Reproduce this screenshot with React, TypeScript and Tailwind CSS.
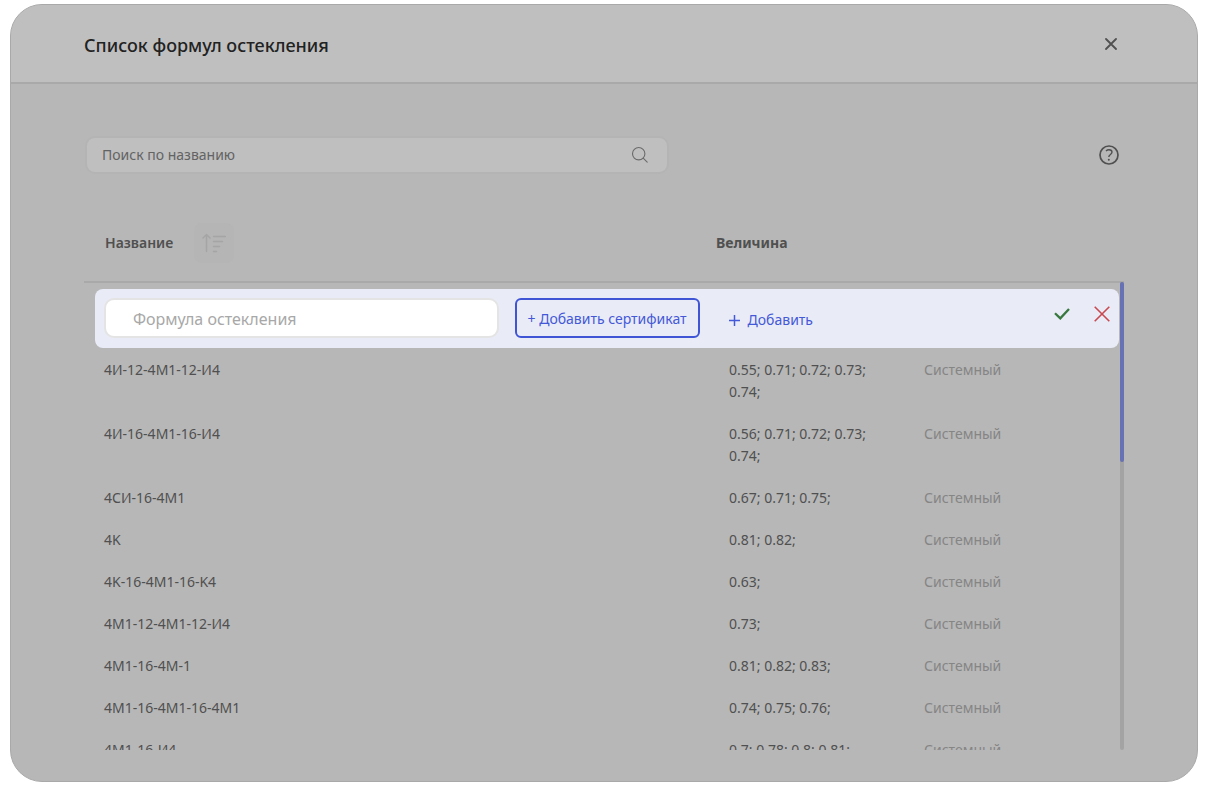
import React from "react";

type Formula = { name: string; values: string };

const formulas: Formula[] = [
  { name: "4И-12-4М1-12-И4", values: "0.55; 0.71; 0.72; 0.73; 0.74;" },
  { name: "4И-16-4М1-16-И4", values: "0.56; 0.71; 0.72; 0.73; 0.74;" },
  { name: "4СИ-16-4М1", values: "0.67; 0.71; 0.75;" },
  { name: "4K", values: "0.81; 0.82;" },
  { name: "4K-16-4М1-16-K4", values: "0.63;" },
  { name: "4М1-12-4М1-12-И4", values: "0.73;" },
  { name: "4М1-16-4М-1", values: "0.81; 0.82; 0.83;" },
  { name: "4М1-16-4М1-16-4М1", values: "0.74; 0.75; 0.76;" },
  { name: "4М1-16-И4", values: "0.7; 0.78; 0.8; 0.81;" },
];

function CloseIcon() {
  return (
    <svg width="12" height="12" viewBox="0 0 12 12" fill="none" stroke="currentColor" strokeWidth="1.8" strokeLinecap="round">
      <path d="M1 1l10 10M11 1L1 11" />
    </svg>
  );
}

function SearchIcon() {
  return (
    <svg width="18" height="18" viewBox="0 0 18 18" fill="none" stroke="currentColor" strokeWidth="1.1" strokeLinecap="round">
      <circle cx="7.7" cy="7.7" r="6.2" />
      <path d="M12.2 12.2l4 4" />
    </svg>
  );
}

function HelpIcon() {
  return (
    <svg width="20" height="20" viewBox="0 0 20 20" fill="none" stroke="currentColor" strokeWidth="1.7">
      <circle cx="10" cy="10" r="9" />
      <path d="M7 5.900C7.800 5.100 8.800 4.700 10 4.700c1.900 0 3 .9 3 2.400 0 2.400-3.200 2.400-3.200 5" strokeWidth="1.4" />
      <circle cx="9.800" cy="14.700" r="1" fill="currentColor" stroke="none" />
    </svg>
  );
}

function SortIcon() {
  return (
    <svg width="24" height="20" viewBox="0 0 24 20" fill="none" stroke="currentColor" strokeWidth="1.5" strokeLinecap="round" strokeLinejoin="round">
      <path d="M4.500 18.500V1.500M1 5l3.500-3.500L8 5M11.500 3.500h12M11.500 8.500h9M11.500 13.500h6M11.500 18.500h3" />
    </svg>
  );
}

function PlusIcon() {
  return (
    <svg width="11" height="11" viewBox="0 0 11 11" fill="none" stroke="currentColor" strokeWidth="1.5">
      <path d="M5.500 0v11M0 5.500h11" />
    </svg>
  );
}

function CheckIcon() {
  return (
    <svg width="16" height="12" viewBox="0 0 16 12" fill="none" stroke="currentColor" strokeWidth="2.3">
      <path d="M1 5.200l5.300 5.200L15 1" />
    </svg>
  );
}

function CancelIcon() {
  return (
    <svg width="16" height="16" viewBox="0 0 16 16" fill="none" stroke="currentColor" strokeWidth="1.6">
      <path d="M0.700 0.700l14.600 14.600M15.300 0.700L0.700 15.300" />
    </svg>
  );
}

function NewFormulaForm() {
  return (
    <form className="ml-[11px] mr-[5px] flex h-[59px] rounded-lg bg-[#e9ebf7] px-[9px]">
      <input
        aria-label="Формула остекления"
        placeholder="Формула остекления"
        className="mt-[9px] h-10 min-w-0 flex-1 rounded-[10px] border-2 border-[#e4e4e4] bg-white px-[27px] pt-0.5 text-base text-[#444] outline-none placeholder:text-[#a8a8a8]"
      />
      <button type="button" className="ml-4 mt-[9px] h-10 w-[185px] whitespace-nowrap rounded-md border-2 border-[#3f55d6] pt-0.5 text-sm text-[#4459d8]">
        + Добавить сертификат
      </button>
      <button type="button" className="ml-[29px] mt-[11px] flex h-10 items-center gap-2 text-sm text-[#4459d8]">
        <PlusIcon />
        Добавить
      </button>
      <div className="flex h-[49px] w-[297px] items-center justify-end gap-6">
        <button type="submit" aria-label="Сохранить" className="text-[#38783f]">
          <CheckIcon />
        </button>
        <button type="button" aria-label="Отменить" className="text-[#c84a50]">
          <CancelIcon />
        </button>
      </div>
    </form>
  );
}

export default function App() {
  return (
    <div className="h-screen bg-white pb-1 pl-2.5 pr-3 pt-1 font-['Noto_Sans','Open_Sans',sans-serif] text-[#505050]">
      <section className="flex h-full flex-col overflow-hidden rounded-[32px] border border-[#a9a9a9] bg-[#b7b7b7]">
        <header className="flex h-[79px] shrink-0 items-center justify-between border-b-2 border-[#a9a9a9] bg-[#bfbfbf] pl-[73px] pr-20">
          <h1 className="mt-0.5 text-lg font-medium text-[#222]">Список формул остекления</h1>
          <button type="button" aria-label="Закрыть">
            <CloseIcon />
          </button>
        </header>

        <div className="flex min-h-0 flex-1 flex-col pb-[31px] pl-[73px] pr-[73px] pt-[52px]">
          <div className="flex items-center justify-between pl-px pr-[5px]">
            <label className="flex h-[38px] w-[56.500%] items-center rounded-[10px] border-2 border-[#b4b4b4] bg-[#bfbfbf] pl-[15px] pr-[18px] text-[#6a6a6a]">
              <input
                aria-label="Поиск по названию"
                placeholder="Поиск по названию"
                className="min-w-0 flex-1 bg-transparent text-sm outline-none placeholder:text-[#636363]"
              />
              <SearchIcon />
            </label>
            <button type="button" aria-label="Справка">
              <HelpIcon />
            </button>
          </div>

          <div className="relative mt-12 min-h-0 flex-1 overflow-hidden">
            <table className="w-full table-fixed border-separate border-spacing-0 text-left text-sm leading-[22px]">
              <colgroup>
                <col />
                <col className="w-[195px]" />
                <col className="w-[213px]" />
              </colgroup>
              <thead>
                <tr className="h-[61px]">
                  <th className="border-b-2 border-[#a9a9a9] pb-[18px] pl-[21px] font-semibold">
                    <div className="flex items-center gap-[21px]">
                      Название
                      <button type="button" aria-label="Сортировать" className="flex size-10 items-center justify-center rounded-lg bg-[#b5b5b5] text-[#a5a5a5]">
                        <SortIcon />
                      </button>
                    </div>
                  </th>
                  <th className="border-b-2 border-[#a9a9a9] pb-[18px] font-bold">Величина</th>
                  <td className="border-b-2 border-[#a9a9a9]" />
                </tr>
              </thead>
              <tbody>
                <tr>
                  <td colSpan={3} className="pb-px pt-1.5">
                    <NewFormulaForm />
                  </td>
                </tr>
                {formulas.map((formula) => (
                  <tr key={formula.name} className="align-top">
                    <td className="py-2.5 pl-5">{formula.name}</td>
                    <td className="py-2.5 pl-[13px] pr-10">{formula.values}</td>
                    <td className="py-2.5 pl-[13px] text-[#858585]">Системный</td>
                  </tr>
                ))}
              </tbody>
            </table>
            <div className="absolute bottom-0 right-0 top-[60px] w-1 rounded-full bg-[#a3a3a3]">
              <div className="h-[180px] rounded-full bg-[#6672b3]" />
            </div>
          </div>
        </div>
      </section>
    </div>
  );
}
